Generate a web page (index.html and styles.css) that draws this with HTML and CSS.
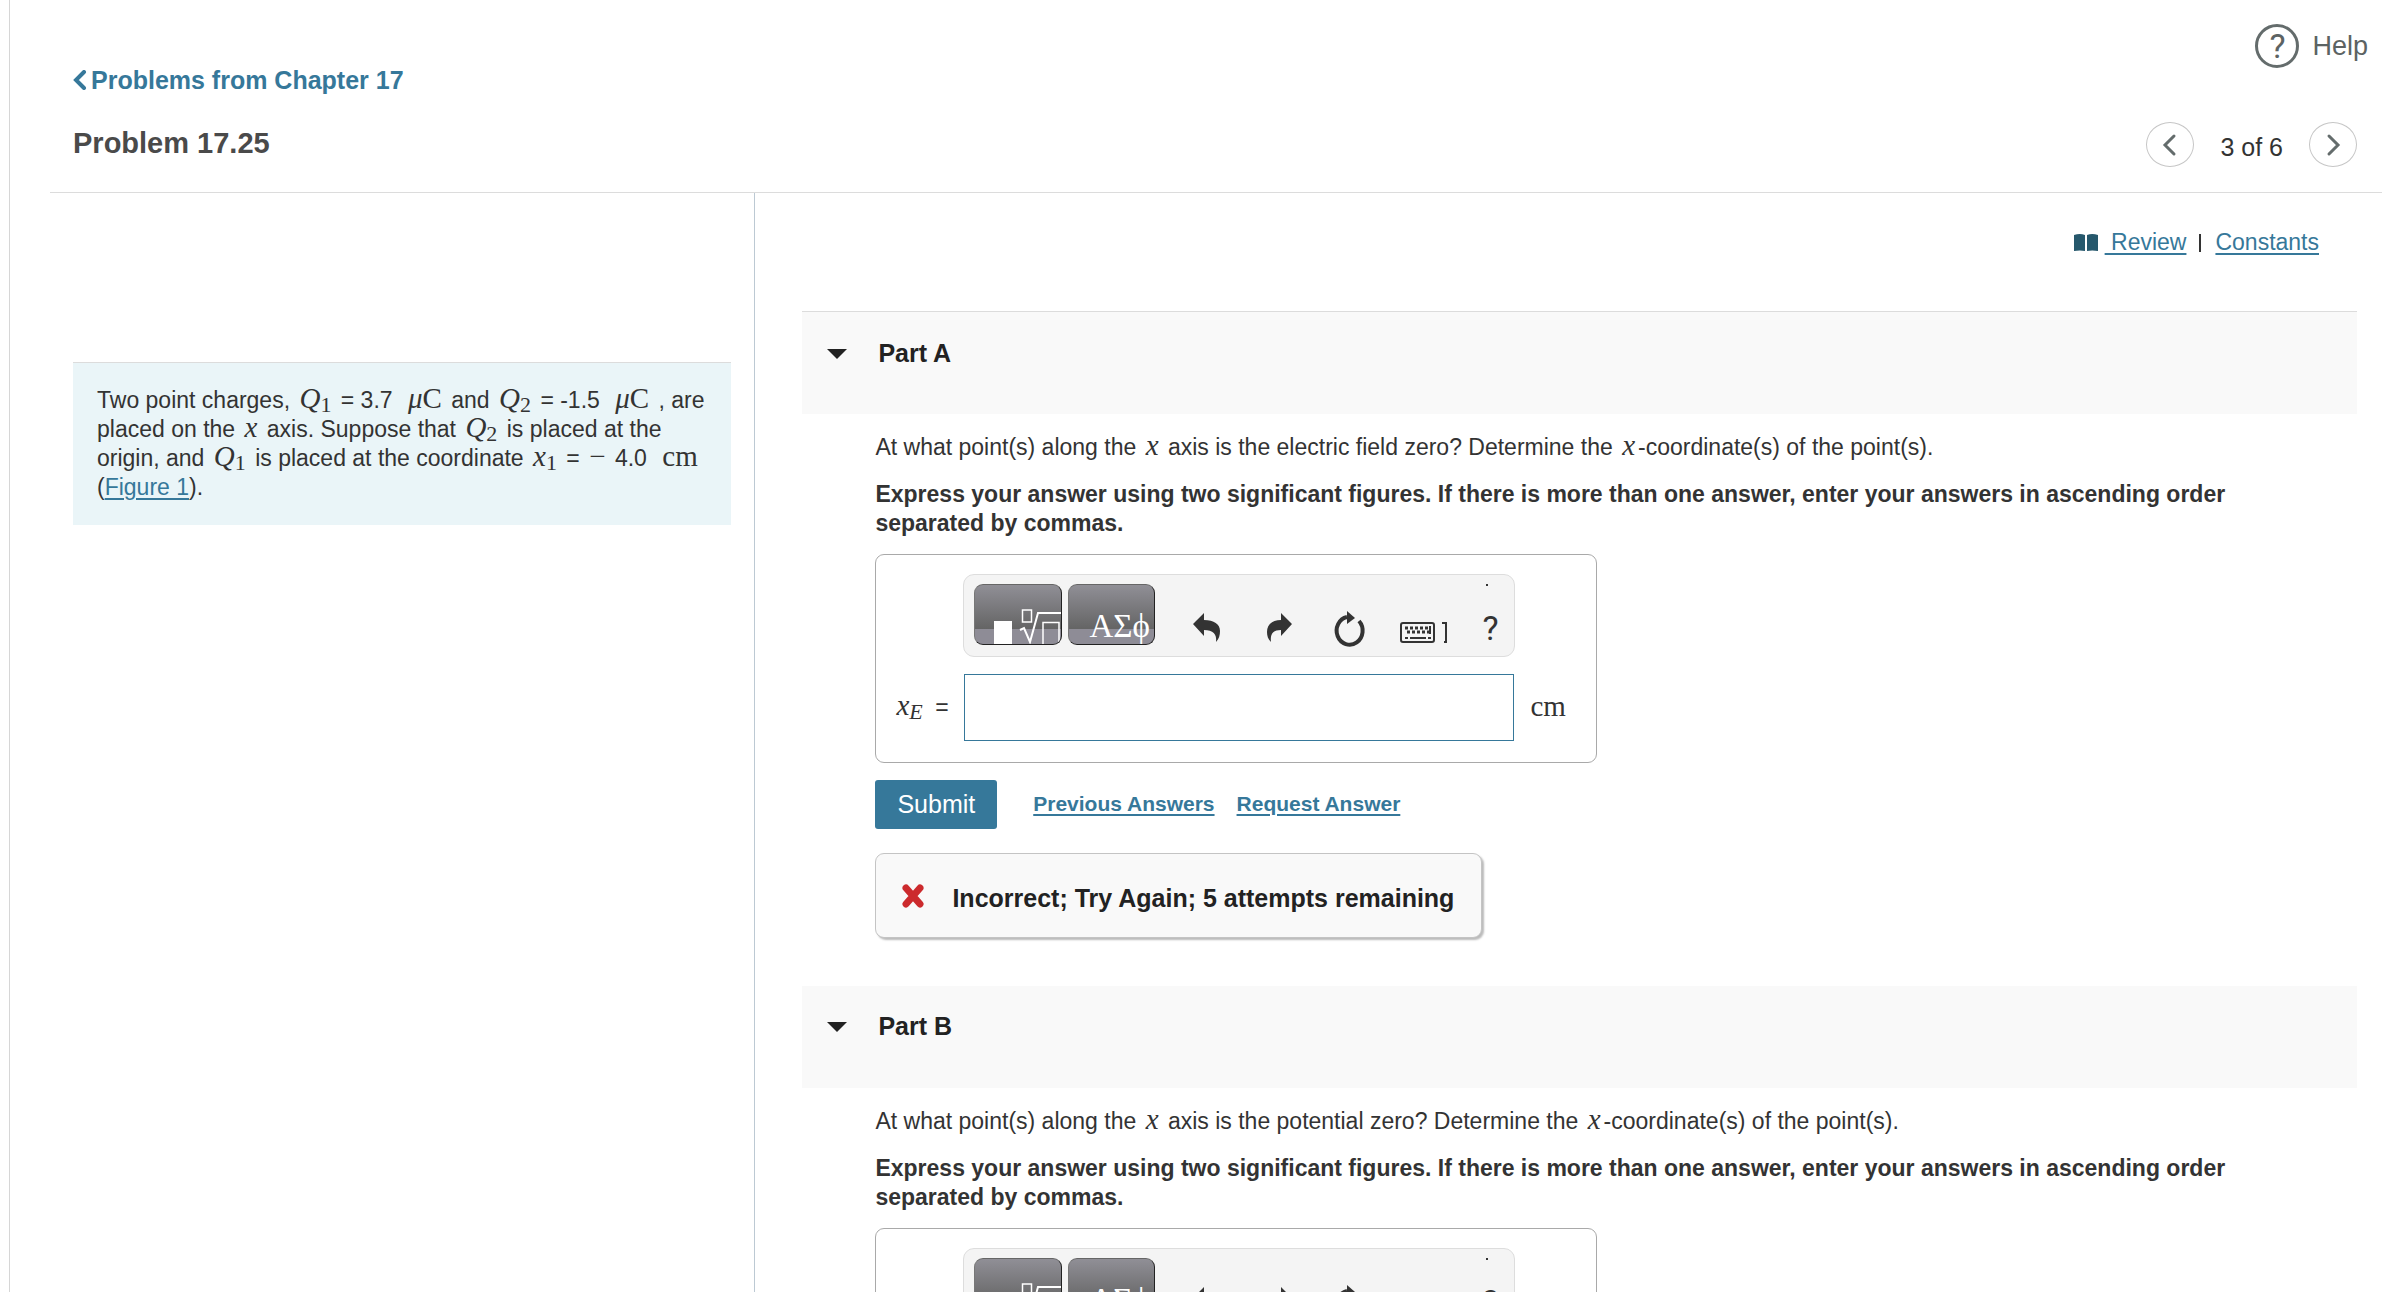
FILE: index.html
```html
<!DOCTYPE html>
<html lang="en">
<head>
    <meta charset="UTF-8">
    <meta name="viewport" content="width=device-width, initial-scale=1.0">
    <title>Problem 17.25</title>
    <link rel="stylesheet" href="styles.css">
</head>
<body>

    <!-- Shared icons, used by both answer toolbars -->
    <svg class="sprite" aria-hidden="true">
        <symbol id="icon-templates" viewBox="0 0 86 59">
            <rect x="19" y="36" width="18" height="23" fill="#fff"/>
            <rect x="47.5" y="25" width="9" height="12" fill="none" stroke="#fff" stroke-width="1.5"/>
            <path d="M45 45l4-2 6 14 8-29h23" fill="none" stroke="#fff" stroke-width="2"/>
            <path d="M68 60V37.5h16V60" fill="none" stroke="#fff" stroke-width="1.5"/>
        </symbol>
        <symbol id="icon-undo" viewBox="0 0 48 34">
            <path d="M10 13L21 2v7c10 0 16 4 16 11 0 4-1 8-4 11 1-8-3-12-12-12v6z" fill="#333"/>
        </symbol>
        <symbol id="icon-redo" viewBox="0 0 48 34">
            <path d="M38 13L27 2v7c-9 0-14 5-14 12 0 4 1 7 4 10-1-8 2-12 10-12v6z" fill="#333"/>
        </symbol>
        <symbol id="icon-reset" viewBox="0 0 48 34">
            <path d="M34 10a13 14 0 1 1-12-4" fill="none" stroke="#333" stroke-width="4"/>
            <path d="M22 0l8 7-8 6z" fill="#333"/>
        </symbol>
        <symbol id="icon-keyboard" viewBox="0 0 48 34">
            <rect x="5" y="12" width="33" height="19" rx="2" fill="none" stroke="#333" stroke-width="2"/>
            <path d="M9 17h23M11 21h22" stroke="#333" stroke-width="3" stroke-dasharray="3 2"/>
            <path d="M9 27h3M14 27h16M32 27h3M34 15v8" stroke="#333" stroke-width="2"/>
            <path d="M46 12h4v19h-2" fill="none" stroke="#333" stroke-width="2"/>
        </symbol>
        <symbol id="icon-caret" viewBox="0 0 20 10">
            <path d="M0 0h20L10 10z" fill="#222"/>
        </symbol>
    </svg>

    <div class="page">
        <header class="header">
            <div class="header-left">
                <a href="#" class="back-link"><svg class="back-icon" viewBox="0 0 14 20"><path d="M11 2L3 10l8 8" fill="none" stroke="#36789a" stroke-width="4" stroke-linecap="round"/></svg>Problems from Chapter 17</a>
                <h1>Problem 17.25</h1>
            </div>
            <div class="header-right">
                <button class="help"><span class="help-icon">?</span>Help</button>
                <nav class="pager">
                    <button class="pager-button" aria-label="Previous"><svg width="16" height="24" viewBox="0 0 16 24"><path d="M12 3L3 12l9 9" fill="none" stroke="#646c6c" stroke-width="3" stroke-linecap="round"/></svg></button>
                    <span class="pager-text">3 of 6</span>
                    <button class="pager-button" aria-label="Next"><svg width="16" height="24" viewBox="0 0 16 24"><path d="M4 3l9 9-9 9" fill="none" stroke="#646c6c" stroke-width="3" stroke-linecap="round"/></svg></button>
                </nav>
            </div>
        </header>

        <div class="columns">
            <aside class="sidebar">
                <div class="statement">
                    Two point charges, <span class="math"><i>Q</i><sub>1</sub></span> = 3.7 <span class="math unit"><i>μ</i>C</span> and <span class="math"><i>Q</i><sub>2</sub></span> = -1.5 <span class="math unit"><i>μ</i>C</span> , are placed on the <i class="math">x</i> axis. Suppose that <span class="math"><i>Q</i><sub>2</sub></span> is placed at the origin, and <span class="math"><i>Q</i><sub>1</sub></span> is placed at the coordinate <span class="math"><i>x</i><sub>1</sub></span> = <span class="math">−</span> 4.0 <span class="math unit">cm</span> (<a href="#">Figure 1</a>).
                </div>
            </aside>

            <main class="content">
                <div class="tools">
                    <svg class="book-icon" viewBox="0 0 24 18"><path d="M0 1q6-2 11 0v16q-5-1-11 0zM13 1q5-2 11 0v16q-6-1-11 0z" fill="#26586c"/></svg>
                    <a href="#" class="review">&nbsp;Review</a>
                    <span class="divider"></span>
                    <a href="#">Constants</a>
                </div>

                <section class="part part-first">
                    <h2 class="part-header"><svg class="caret"><use href="#icon-caret"/></svg>Part A</h2>
                    <div class="part-body">
                        <p>At what point(s) along the <i class="math">x</i> axis is the electric field zero? Determine the <i class="math">x</i>-coordinate(s) of the point(s).</p>
                        <p class="instructions">Express your answer using two significant figures. If there is more than one answer, enter your answers in ascending order separated by commas.</p>
                        <div class="answer">
                            <div class="toolbar">
                                <button class="dark" aria-label="Templates"><svg class="templates"><use href="#icon-templates"/></svg></button>
                                <button class="dark greek">ΑΣϕ</button>
                                <button class="tool" aria-label="Undo"><svg><use href="#icon-undo"/></svg></button>
                                <button class="tool" aria-label="Redo"><svg><use href="#icon-redo"/></svg></button>
                                <button class="tool" aria-label="Reset"><svg><use href="#icon-reset"/></svg></button>
                                <button class="tool" aria-label="Keyboard shortcuts"><svg><use href="#icon-keyboard"/></svg></button>
                                <button class="tool question">?</button>
                            </div>
                            <label for="answerA"><span class="math"><i>x</i><sub><i>E</i></sub></span> =</label>
                            <input type="text" id="answerA">
                            <span class="math">cm</span>
                        </div>
                        <div class="actions">
                            <button class="submit">Submit</button>
                            <a href="#">Previous Answers</a>
                            <a href="#">Request Answer</a>
                        </div>
                        <div class="feedback">
                            <svg class="wrong" viewBox="0 0 24 24"><path d="M5 4l14 16M19 4L5 20" stroke="#cc2a2d" stroke-width="7" stroke-linecap="round"/></svg>
                            Incorrect; Try Again; 5 attempts remaining
                        </div>
                    </div>
                </section>

                <section class="part">
                    <h2 class="part-header"><svg class="caret"><use href="#icon-caret"/></svg>Part B</h2>
                    <div class="part-body">
                        <p>At what point(s) along the <i class="math">x</i> axis is the potential zero? Determine the <i class="math">x</i>-coordinate(s) of the point(s).</p>
                        <p class="instructions">Express your answer using two significant figures. If there is more than one answer, enter your answers in ascending order separated by commas.</p>
                        <div class="answer">
                            <div class="toolbar">
                                <button class="dark" aria-label="Templates"><svg class="templates"><use href="#icon-templates"/></svg></button>
                                <button class="dark greek">ΑΣϕ</button>
                                <button class="tool" aria-label="Undo"><svg><use href="#icon-undo"/></svg></button>
                                <button class="tool" aria-label="Redo"><svg><use href="#icon-redo"/></svg></button>
                                <button class="tool" aria-label="Reset"><svg><use href="#icon-reset"/></svg></button>
                                <button class="tool" aria-label="Keyboard shortcuts"><svg><use href="#icon-keyboard"/></svg></button>
                                <button class="tool question">?</button>
                            </div>
                            <label for="answerB"><span class="math"><i>x</i></span> =</label>
                            <input type="text" id="answerB">
                            <span class="math">cm</span>
                        </div>
                    </div>
                </section>
            </main>
        </div>
    </div>

</body>
</html>
```

FILE: styles.css
```css
* {
    box-sizing: border-box;
}

body {
    margin: 0;
    height: 100vh;
    overflow: hidden;
    font-family: "Liberation Sans", Arial, sans-serif;
    font-size: 23px;
    line-height: 29px;
    color: #333;
    background-color: #fff;
}

a {
    color: #36789a;
    text-underline-offset: 3px;
    text-decoration-thickness: 2px;
}

button {
    font-family: inherit;
    padding: 0;
    border: none;
    background: none;
    cursor: pointer;
}

.sprite {
    display: none;
}

symbol {
    overflow: visible;
}

.page {
    min-height: 100%;
    margin-left: 9px;
    padding-left: 40px;
    border-left: 1px solid #d6d6d6;
}

/* Header */
.header {
    display: flex;
    justify-content: space-between;
    border-bottom: 1px solid #dcdcdc;
}

.header-left {
    padding: 65px 0 32px 23px;
}

.back-link {
    display: flex;
    align-items: center;
    font-size: 25px;
    font-weight: bold;
    line-height: 30px;
    text-decoration: none;
}

.back-icon {
    width: 14px;
    height: 20px;
    margin-right: 4px;
}

h1 {
    margin: 31px 0 0;
    font-size: 29px;
    line-height: 34px;
    color: #4a4a4a;
}

.header-right {
    display: flex;
    flex-direction: column;
    align-items: flex-end;
    gap: 54px;
    padding-top: 24px;
}

.help {
    display: flex;
    align-items: center;
    gap: 13px;
    margin-right: 14px;
    font-size: 27px;
    color: #5c6363;
}

.help-icon {
    width: 44px;
    height: 44px;
    border: 3px solid #646c6c;
    border-radius: 50%;
    font-family: Roboto, sans-serif;
    font-size: 34px;
    line-height: 38px;
}

.pager {
    display: flex;
    align-items: center;
    gap: 26px;
    margin-right: 25px;
}

.pager-button {
    display: flex;
    align-items: center;
    justify-content: center;
    width: 48px;
    height: 45px;
    border: 1px solid #c6c6c6;
    border-radius: 50%;
}

.pager-text {
    padding-top: 5px;
    font-size: 25px;
}

/* Columns */
.columns {
    display: grid;
    grid-template-columns: 30.25% 1fr;
}

.sidebar {
    padding: 169px 23px 0;
    border-right: 1px solid #bcc9d3;
}

.statement {
    padding: 23px 24px;
    border-top: 1px solid #dcdcdc;
    background-color: #eaf5f8;
}

.math {
    margin: 0 3px;
    font-family: "Liberation Serif", "Times New Roman", serif;
    font-size: 29px;
    line-height: 18px;
}

.math sub {
    font-size: 22px;
    vertical-align: -4px;
}

.unit {
    margin-left: 9px;
}

.content {
    padding: 35px 25px 0 47px;
}

.tools {
    display: flex;
    align-items: center;
    justify-content: flex-end;
    margin: 0 38px 54px 0;
}

.book-icon {
    width: 24px;
    height: 18px;
    margin-right: 7px;
}

.divider {
    width: 2px;
    height: 18px;
    margin: 0 14px 0 13px;
    background-color: #333;
}

/* Parts */
.part {
    margin-bottom: 48px;
}

.part-header {
    display: flex;
    align-items: flex-start;
    height: 102px;
    margin: 0;
    padding: 26px 25px;
    font-size: 25px;
    line-height: 29px;
    color: #222;
    background-color: #f9f9f9;
}

.part-first .part-header {
    height: 103px;
    padding-top: 27px;
    border-top: 1px solid #dcdcdc;
}

.caret {
    width: 20px;
    height: 10px;
    margin: 10px 31px 0 0;
}

.part-body {
    padding: 19px 73px 0;
}

.part-body p {
    margin: 0 0 18px;
}

.part-body .instructions {
    margin-bottom: 16px;
    font-weight: bold;
}

.answer {
    display: inline-grid;
    grid-template-columns: 70px 550px auto;
    row-gap: 17px;
    align-items: center;
    padding: 19px 27px 21px 17px;
    border: 1px solid #a9a9a9;
    border-radius: 9px;
    vertical-align: top;
}

.answer label {
    grid-column: 1;
}

.answer label .math {
    margin-right: 6px;
}

.answer input {
    grid-column: 2;
    width: 100%;
    height: 67px;
    margin-left: 1px;
    padding: 0 12px;
    border: 1px solid #36789a;
    font-size: 25px;
}

.answer > .math {
    margin-left: 17px;
    padding-bottom: 4px;
}

.toolbar {
    position: relative;
    grid-column: 2;
    display: flex;
    align-items: flex-end;
    height: 83px;
    margin: 0 -2px 0 0;
    padding: 0 0 11px 10px;
    border: 1px solid #ddd;
    border-radius: 11px;
    background-color: #f4f4f4;
}

/* small mark above the question button */
.toolbar::after {
    content: "";
    position: absolute;
    top: 9px;
    right: 26px;
    width: 2px;
    height: 2px;
    background-color: #333;
}

.dark {
    width: 88px;
    height: 61px;
    margin-right: 6px;
    overflow: hidden;
    border: 1px solid #222;
    border-top-color: #666;
    border-left-color: #777;
    border-radius: 9px;
    background: linear-gradient(#908f96, #646464 75%, #8e8c96 75%);
    color: #fff;
}

.templates {
    display: block;
    width: 86px;
    height: 59px;
}

.greek {
    margin-right: 28px;
    padding: 22px 4px 0 0;
    font-family: "Liberation Serif", serif;
    font-size: 33px;
    line-height: 34px;
    text-align: right;
}

.tool {
    width: 48px;
    height: 34px;
    margin-right: 23px;
}

.tool svg {
    display: block;
    width: 48px;
    height: 34px;
    overflow: visible;
}

.tool.question {
    margin-right: 0;
    font-family: Roboto, sans-serif;
    font-size: 34px;
    line-height: 34px;
    color: #333;
}

.actions {
    display: flex;
    align-items: center;
    margin: 17px 0 24px;
    font-size: 21px;
    font-weight: bold;
}

.submit {
    height: 49px;
    margin-right: 36px;
    padding: 0 22px;
    border-radius: 3px;
    font-size: 25px;
    color: #fff;
    background-color: #36789a;
}

.actions a {
    margin-right: 22px;
    padding-bottom: 2px;
}

.feedback {
    display: inline-flex;
    align-items: center;
    height: 85px;
    padding: 5px 27px 0 25px;
    border: 1px solid #c4c4c4;
    border-radius: 9px;
    box-shadow: 2px 2px 2px #bbb;
    font-size: 25px;
    font-weight: bold;
    color: #222;
    background-color: #f9f9f9;
    vertical-align: top;
}

.wrong {
    width: 24px;
    height: 24px;
    margin: 0 27px 5px 0;
}
```
